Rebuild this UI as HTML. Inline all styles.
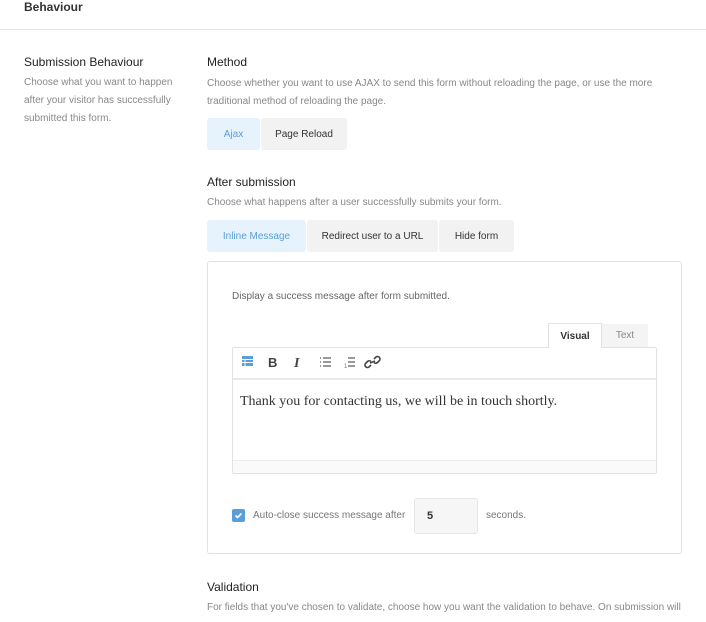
<!DOCTYPE html>
<html><head><style>
*{box-sizing:border-box;margin:0;padding:0}
body{width:706px;height:622px;overflow:hidden;background:#fff;font-family:"Liberation Sans",Arial,sans-serif;position:relative;color:#333}
.a{position:absolute;white-space:nowrap}
.h{font-size:12px;font-weight:bold;color:#333}
.t{font-size:12px;color:#222}
.d{font-size:10px;color:#888;line-height:18px}
.btn{position:absolute;height:32px;background:#f2f2f2;font-size:10px;color:#333;display:flex;align-items:center;justify-content:center;border-radius:3px}
.on{background:#e6f3fd;color:#5a9ed8}
</style></head><body>
<div class="a h" style="left:24px;top:0px">Behaviour</div>
<div class="a" style="left:0;top:29px;width:706px;border-top:1px solid #e6e6e6"></div>
<div class="a t" style="left:24px;top:55px">Submission Behaviour</div>
<div class="a d" style="left:24px;top:74px">Choose what you want to happen<br>after your visitor has successfully<br>submitted this form.</div>
<div class="a t" style="left:207px;top:55px">Method</div>
<div class="a d" style="left:207px;top:75px">Choose whether you want to use AJAX to send this form without reloading the page, or use the more<br>traditional method of reloading the page.</div>
<div class="btn on" style="left:207px;top:118px;width:53px">Ajax</div>
<div class="btn" style="left:261px;top:118px;width:86px">Page Reload</div>
<div class="a t" style="left:207px;top:175px">After submission</div>
<div class="a d" style="left:207px;top:194px">Choose what happens after a user successfully submits your form.</div>
<div class="btn on" style="left:207px;top:220px;width:99px">Inline Message</div>
<div class="btn" style="left:307px;top:220px;width:131px">Redirect user to a URL</div>
<div class="btn" style="left:439px;top:220px;width:75px">Hide form</div>
<div class="a" style="left:207px;top:261px;width:475px;height:293px;border:1px solid #e2e2e2;border-radius:3px"></div>
<div class="a d" style="left:232px;top:288px;color:#666">Display a success message after form submitted.</div>
<div class="a" style="left:548px;top:323px;width:54px;height:25px;border:1px solid #e2e2e2;border-bottom:none;background:#fff;font-size:10px;font-weight:bold;display:flex;align-items:center;justify-content:center;z-index:2">Visual</div>
<div class="a" style="left:602px;top:324px;width:46px;height:23px;background:#f4f4f4;font-size:10px;color:#888;display:flex;align-items:center;justify-content:center">Text</div>
<div class="a" style="left:232px;top:347px;width:425px;height:127px;border:1px solid #e2e2e2;border-radius:2px"></div>
<div class="a" style="left:233px;top:378px;width:423px;border-top:2px solid #eaeaea"></div>
<div class="a" style="left:233px;top:460px;width:423px;height:13px;border-top:1px solid #eee;background:#fafafa"></div>
<svg class="a" style="left:240px;top:353px" width="160" height="20" viewBox="0 0 160 20">
<rect x="2" y="3" width="11" height="10" fill="#5a9ed8"/><line x1="2" y1="6.5" x2="13" y2="6.5" stroke="#fff"/><line x1="2" y1="9.5" x2="13" y2="9.5" stroke="#fff"/><line x1="5" y1="6" x2="5" y2="13" stroke="#fff"/>
<text x="28" y="14" font-family="Liberation Sans" font-weight="bold" font-size="13" fill="#444">B</text>
<text x="54" y="14" font-family="Liberation Serif" font-style="italic" font-weight="bold" font-size="14" fill="#444">I</text>
<g stroke="#555" stroke-width="1.2"><line x1="83" y1="5" x2="91" y2="5"/><line x1="83" y1="9" x2="91" y2="9"/><line x1="83" y1="13" x2="91" y2="13"/>
<line x1="80" y1="5" x2="81" y2="5"/><line x1="80" y1="9" x2="81" y2="9"/><line x1="80" y1="13" x2="81" y2="13"/>
<line x1="108" y1="5" x2="115" y2="5"/><line x1="108" y1="9" x2="115" y2="9"/><line x1="108" y1="13" x2="115" y2="13"/></g>
<text x="104" y="15" font-size="6" fill="#777">1</text>
<g fill="none" stroke="#444" stroke-width="1.6"><path d="M131 12l-2 2a2.5 2.5 0 0 1-3.5-3.5l2-2a2.5 2.5 0 0 1 3.5 0"/><path d="M134 6l2-2a2.5 2.5 0 0 1 3.5 3.5l-2 2a2.5 2.5 0 0 1-3.5 0"/><line x1="130" y1="10" x2="135" y2="8"/></g>
</svg>
<div class="a" style="left:240px;top:394px;font-family:'Liberation Serif',serif;font-size:14px;color:#333">Thank you for contacting us, we will be in touch shortly.</div>
<div class="a" style="left:232px;top:509px;width:13px;height:13px;background:#5a9ed8;border-radius:2px"><svg width="13" height="13"><path d="M3.5 6.5l2 2 4-4" stroke="#fff" stroke-width="1.6" fill="none"/></svg></div>
<div class="a d" style="left:253px;top:507px;color:#777">Auto-close success message after</div>
<div class="a" style="left:414px;top:498px;width:64px;height:36px;background:#f6f6f6;border:1px solid #e6e6e6;border-radius:3px;font-size:11px;font-weight:bold;padding:11px 0 0 12px">5</div>
<div class="a d" style="left:486px;top:507px;color:#777">seconds.</div>
<div class="a t" style="left:207px;top:580px">Validation</div>
<div class="a d" style="left:207px;top:599px">For fields that you've chosen to validate, choose how you want the validation to behave. On submission will</div>
</body></html>
